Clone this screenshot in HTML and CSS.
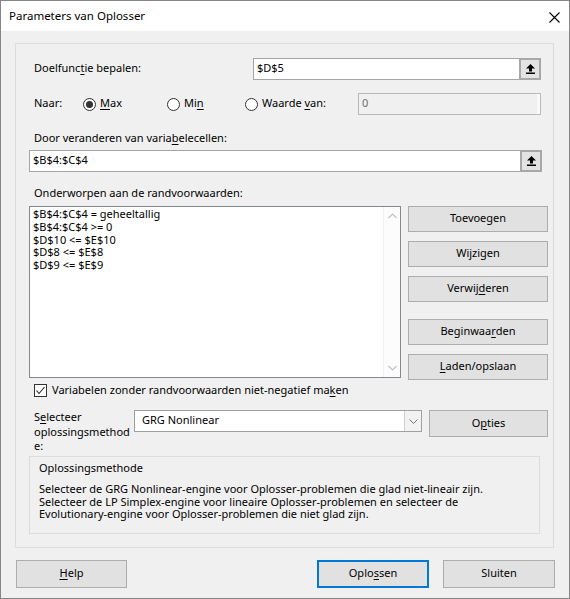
FILE: index.html
```html
<!DOCTYPE html>
<html>
<head>
<meta charset="utf-8">
<title>Parameters van Oplosser</title>
<link rel="stylesheet" href="styles.css">
</head>
<body>
<div class="window">
  <div class="titlebar">
    <span class="title">Parameters van Oplosser</span>
    <svg class="close" width="11" height="11" viewBox="0 0 11 11"><path d="M0.5 0.5 L10.5 10.5 M10.5 0.5 L0.5 10.5" stroke="#000" stroke-width="1.1" fill="none"/></svg>
  </div>
  <div class="body">
    <div class="frame">
      <div class="row r1">
        <span class="lbl">Doelfunc<u>t</u>ie bepalen:</span>
        <div class="refedit obj">
          <span class="val">$D$5</span>
          <span class="refbtn"><svg width="9" height="10" viewBox="0 0 9 10"><path d="M4.5 0 L0 4.5 L3 4.5 L3 7.5 L6 7.5 L6 4.5 L9 4.5 Z" fill="#000"/><rect x="0" y="8.5" width="9" height="1.5" fill="#000"/></svg></span>
        </div>
      </div>
      <div class="row r2">
        <span class="lbl naar">Naar:</span>
        <span class="radio r-max"><span class="circle on"></span><span class="rtext"><u>M</u>ax</span></span>
        <span class="radio r-min"><span class="circle"></span><span class="rtext">Mi<u>n</u></span></span>
        <span class="radio r-val"><span class="circle"></span><span class="rtext">Waarde <u>v</u>an:</span></span>
        <div class="textbox disabled">0</div>
      </div>
      <div class="lbl line l-var">Door veranderen van varia<u>b</u>elecellen:</div>
      <div class="refedit var">
        <span class="val">$B$4:$C$4</span>
        <span class="refbtn"><svg width="9" height="10" viewBox="0 0 9 10"><path d="M4.5 0 L0 4.5 L3 4.5 L3 7.5 L6 7.5 L6 4.5 L9 4.5 Z" fill="#000"/><rect x="0" y="8.5" width="9" height="1.5" fill="#000"/></svg></span>
      </div>
      <div class="lbl line l-con">Onderworpen aan de randvoorwaarden:</div>
      <div class="row listrow">
        <div class="listbox">
          <div class="items">
            <div>$B$4:$C$4 = geheeltallig</div>
            <div>$B$4:$C$4 &gt;= 0</div>
            <div>$D$10 &lt;= $E$10</div>
            <div>$D$8 &lt;= $E$8</div>
            <div>$D$9 &lt;= $E$9</div>
          </div>
          <div class="scroll">
            <svg width="9" height="6" viewBox="0 0 9 6"><path d="M0.5 5 L4.5 1 L8.5 5" stroke="#c4c4c4" stroke-width="1.2" fill="none"/></svg>
            <svg width="9" height="6" viewBox="0 0 9 6"><path d="M0.5 1 L4.5 5 L8.5 1" stroke="#c4c4c4" stroke-width="1.2" fill="none"/></svg>
          </div>
        </div>
        <div class="btncol">
          <div class="btn">Toevoegen</div>
          <div class="btn">Wijzigen</div>
          <div class="btn">Verwij<u>d</u>eren</div>
          <div class="btn gap">Beginwaa<u>r</u>den</div>
          <div class="btn"><u>L</u>aden/opslaan</div>
        </div>
      </div>
      <div class="row chkrow">
        <span class="checkbox"><svg width="11" height="11" viewBox="0 0 11 11"><path d="M1.5 5.5 L4 8.5 L9.5 2" stroke="#222" stroke-width="1.1" fill="none"/></svg></span>
        <span class="ctext">Variabelen zonder randvoorwaarden niet-negatief ma<u>k</u>en</span>
      </div>
      <div class="row methodrow">
        <div class="lbl mlabel">S<u>e</u>lecteer<br>oplossingsmethod<br>e:</div>
        <div class="combo">
          <span class="cval">GRG Nonlinear</span>
          <span class="carrow"><svg width="9" height="5" viewBox="0 0 9 5"><path d="M0.5 0.5 L4.5 4.5 L8.5 0.5" stroke="#777" stroke-width="1" fill="none"/></svg></span>
        </div>
        <div class="btn opties">O<u>p</u>ties</div>
      </div>
      <div class="desc">
        <div class="dtitle">Oplossingsmethode</div>
        <div class="dtext">Selecteer de GRG Nonlinear-engine voor Oplosser-problemen die glad niet-lineair zijn.<br>Selecteer de LP Simplex-engine voor lineaire Oplosser-problemen en selecteer de<br>Evolutionary-engine voor Oplosser-problemen die niet glad zijn.</div>
      </div>
    </div>
    <div class="footer">
      <div class="btn help"><u>H</u>elp</div>
      <div class="btn default">Oplo<u>s</u>sen</div>
      <div class="btn close-btn">Sluiten</div>
    </div>
  </div>
</div>
</body>
</html>
```

FILE: styles.css
```css
* { box-sizing: border-box; }
html, body { margin: 0; padding: 0; }
body {
  width: 570px;
  height: 599px;
  background: #ffffff;
  font-family: "Noto Sans", "Open Sans", sans-serif;
  font-size: 11px;
  color: #000;
  overflow: hidden;
}
u { text-decoration: underline; text-underline-offset: 2px; }

.window {
  width: 570px;
  height: 599px;
  border: 1px solid #858585;
  background: #f0f0f0;
  display: flex;
  flex-direction: column;
}
.titlebar {
  height: 30px;
  flex: none;
  background: #fff;
  display: flex;
  align-items: center;
  justify-content: space-between;
  padding: 0 9px 0 8px;
}
.title { font-size: 11.5px; line-height: 15px; padding-bottom: 1px; }
.close { margin-top: 3px; }

.body {
  flex: 1;
  padding: 12px 0 0 14px;
  display: flex;
  flex-direction: column;
}
.frame {
  width: 539px;
  height: 505px;
  flex: none;
  border: 1px solid #dcdcdc;
  padding: 0 0 13px 13px;
  display: flex;
  flex-direction: column;
}
.row { display: flex; align-items: center; flex: none; }
.lbl { line-height: 15px; white-space: nowrap; }
.r1 .lbl, .r2 .lbl, .rtext { padding-bottom: 3px; }

.r1 { height: 22px; margin-top: 14px; padding-left: 5px; }
.r2 { height: 22px; margin-top: 13px; padding-left: 5px; }

.refedit {
  height: 22px;
  border: 1px solid #a5a5a5;
  background: #fff;
  display: flex;
  align-items: stretch;
  flex: none;
}
.refedit .val { flex: 1; padding-left: 3px; line-height: 18px; }
.refbtn {
  width: 22px;
  margin: -1px -1px -1px 0;
  border: 2px solid #a8a8a8;
  background: #e3e3e3;
  display: flex;
  align-items: center;
  justify-content: center;
}
.refedit.obj { width: 288px; margin-left: auto; margin-right: 12px; }
.refedit.var { width: 513px; margin-top: 5px; }

.naar { width: 49px; }
.radio { display: flex; align-items: center; line-height: 15px; }
.rtext { white-space: nowrap; }
.r-max { width: 84px; }
.r-min { width: 78px; }
.r-val { width: 113px; }
.circle {
  width: 13px; height: 13px;
  border: 1px solid #333;
  border-radius: 50%;
  background: #fff;
  margin-right: 4px;
  display: flex;
  align-items: center;
  justify-content: center;
  flex: none;
}
.circle.on::after {
  content: "";
  width: 7px; height: 7px;
  border-radius: 50%;
  background: #333;
}
.textbox {
  height: 22px;
  border: 1px solid #b9b9b9;
  line-height: 18px;
  padding-left: 3px;
}
.textbox.disabled {
  width: 183px;
  margin-left: 0;
  background: #f0f0f0;
  color: #6d6d6d;
  box-shadow: inset -3px 0 0 #f9f9f9;
}

.line { flex: none; height: 15px; padding-left: 5px; }
.l-var { margin-top: 15px; }
.l-con { margin-top: 13px; }

.listrow { height: 174px; margin-top: 6px; align-items: flex-start; }
.listbox {
  width: 372px;
  height: 172px;
  border: 1px solid #828790;
  background: #fff;
  display: flex;
}
.items {
  flex: 1;
  padding: 1px 0 0 3px;
  line-height: 12.75px;
}
.scroll {
  width: 17px;
  border-left: 1px solid #f0f0f0;
  background: #fcfcfc;
  display: flex;
  flex-direction: column;
  justify-content: space-between;
  align-items: center;
  padding: 6px 0 6px;
}
.btncol {
  width: 140px;
  margin-left: 7px;
  display: flex;
  flex-direction: column;
  gap: 9px;
}
.btn {
  height: 26px;
  border: 1px solid #adadad;
  background: #e1e1e1;
  display: flex;
  align-items: center;
  justify-content: center;
  line-height: 15px;
  padding-bottom: 3px;
  flex: none;
}
.btn.gap { margin-top: 8px; }

.chkrow { height: 15px; margin-top: 3px; padding-left: 5px; line-height: 15px; }
.ctext { padding-bottom: 2px; }
.checkbox {
  width: 13px; height: 13px;
  border: 1px solid #333;
  background: #fff;
  margin-right: 5px;
  display: flex;
  align-items: center;
  justify-content: center;
  flex: none;
}

.methodrow { height: 47px; margin-top: 11px; align-items: flex-start; }
.mlabel { width: 105px; padding-left: 5px; margin-top: 1px; line-height: 14.6px; }
.combo {
  width: 288px;
  height: 22px;
  margin-top: 1px;
  border: 1px solid #a0a0a0;
  background: #fff;
  display: flex;
}
.cval { flex: 1; padding-left: 7px; line-height: 18px; }
.carrow {
  width: 17px;
  border-left: 1px solid #cfcfcf;
  background: #f2f2f2;
  display: flex;
  align-items: center;
  justify-content: center;
}
.btn.opties { width: 119px; height: 27px; margin-left: 7px; margin-top: 1px; }

.desc {
  width: 511px;
  height: 78px;
  flex: none;
  border: 1px solid #dcdcdc;
  padding: 3px 0 0 9px;
}
.dtitle { line-height: 15px; }
.dtext { margin-top: 8px; line-height: 12.7px; }

.footer {
  display: flex;
  margin-top: 12px;
  padding: 0 14px 0 1px;
}
.footer .btn { height: 28px; }
.help { width: 111px; }
.default { width: 112px; margin-left: auto; border: 2px solid #0078d7; }
.close-btn { width: 112px; margin-left: 14px; }
```
